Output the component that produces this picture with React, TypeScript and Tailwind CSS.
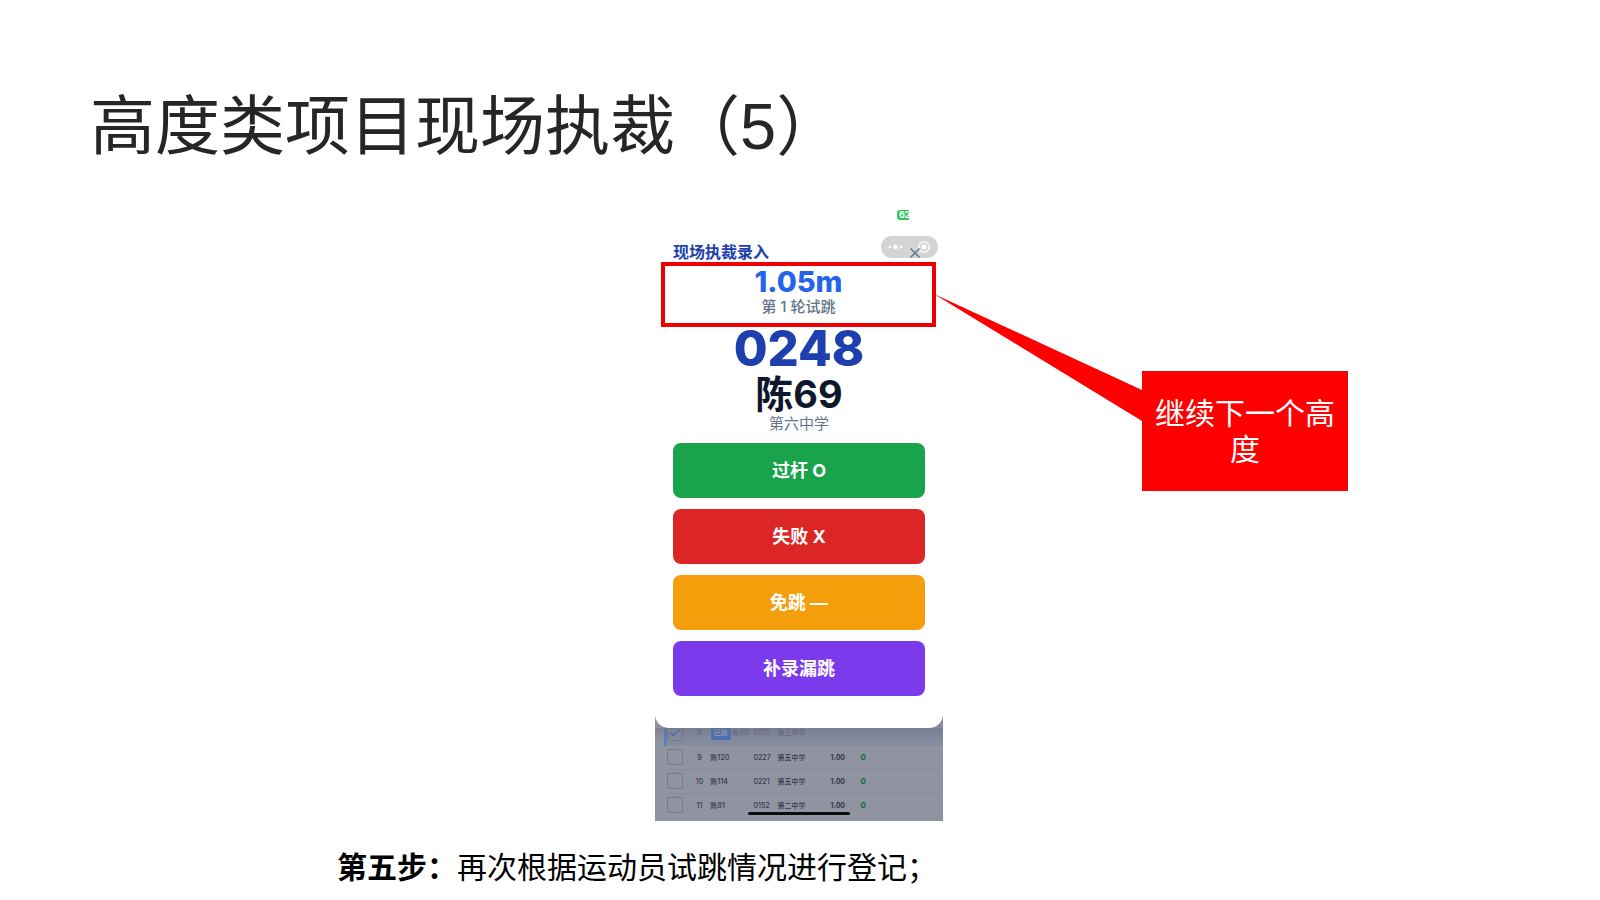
import React from "react";
import { Check } from "lucide-react";

const actions = [
  { label: "过杆 O", className: "bg-[#19a34a]" },
  { label: "失败 X", className: "bg-[#dc2626]" },
  { label: "免跳 —", className: "bg-[#f59e0b]" },
  { label: "补录漏跳", className: "bg-[#7c3aed]" },
];

const athletes = [
  { order: 8, name: "陈90", bib: "0173", school: "第三中学", height: "", result: "", done: true },
  { order: 9, name: "陈120", bib: "0227", school: "第五中学", height: "1.00", result: "O", done: false },
  { order: 10, name: "陈114", bib: "0221", school: "第五中学", height: "1.00", result: "O", done: false },
  { order: 11, name: "陈81", bib: "0152", school: "第二中学", height: "1.00", result: "O", done: false },
];

// Red note box with a wedge that points back at the highlighted area
const Callout: React.FC = () => (
  <div className="absolute top-7 left-full ml-[2px] flex">
    <svg className="block h-[128px] w-[208px]" viewBox="0 0 208 128" aria-hidden="true">
      <polygon points="0,0 208,96 208,127" fill="#ff0000" />
    </svg>
    <p className="mt-[77px] flex h-[120px] w-[206px] shrink-0 items-center justify-center bg-[#ff0000] px-2 text-center text-[30px] leading-9 text-white">
      继续下一个高度
    </p>
  </div>
);

const AthleteTable: React.FC = () => (
  <table className="w-full table-fixed border-collapse text-left text-[7px] leading-none font-medium">
    <colgroup>
      <col className="w-6" />
      <col className="w-[20px]" />
      <col className="w-[44px]" />
      <col className="w-[24px]" />
      <col className="w-[46px]" />
      <col className="w-[31px]" />
      <col />
    </colgroup>
    <tbody>
      {athletes.map((a) => (
        <tr
          key={a.order}
          className={`h-6 border-b border-[#898c99] ${
            a.done ? "bg-[#858b9f] text-[#5f6678]" : "text-[#333a4c]"
          }`}
        >
          <td className={a.done ? "border-l-3 border-[#587fc5]" : "pl-px"}>
            <label className="relative block size-4">
              <input
                type="checkbox"
                defaultChecked={a.done}
                aria-label={`选择 ${a.name}`}
                className="block size-4 appearance-none rounded-[2px] border border-[#777b88]"
              />
              {a.done && <Check className="absolute inset-0 m-auto size-3 text-[#3f68b3]" strokeWidth={2.5} />}
            </label>
          </td>
          <td className="text-center">{a.order}</td>
          <td className="pl-px whitespace-nowrap">
            {a.done && (
              <span className="mr-[2px] rounded-[2px] bg-[#4a6fb5] px-[3px] py-[3px] text-[#9dacc9]">已选</span>
            )}
            {a.name}
          </td>
          <td>{a.bib}</td>
          <td>{a.school}</td>
          <td className="pl-[7px] font-bold">{a.height}</td>
          <td className="pl-[6px] font-extrabold text-[#0c7048]">{a.result}</td>
        </tr>
      ))}
    </tbody>
  </table>
);

const Phone: React.FC = () => (
  <section className="mx-auto w-[288px] bg-[#9093a0] font-['Inter','Noto_Sans_CJK_SC',sans-serif]">
    <div className="relative z-10 rounded-b-[14px] bg-white pb-8">
      {/* Status bar */}
      <div className="flex h-[30px] items-center justify-end pr-[34px]">
        <span className="h-[10px] w-3 overflow-hidden rounded-l-[3px] bg-[#34c759] pl-[2px] text-[9px] leading-[10px] font-bold text-white">
          62
        </span>
      </div>

      <div className="relative flex h-8 items-center pt-[11px] pl-[18px]">
        <h2 className="text-base font-semibold text-[#1e40af]">现场执裁录入</h2>
        <div className="absolute top-[6px] right-[5px] flex h-[22px] w-[57px] items-center rounded-full bg-[#d4d4d4]">
          <svg className="h-[22px] w-[57px]" viewBox="0 0 57 22" fill="#fff" aria-hidden="true">
            <circle cx="9" cy="11" r="1.3" />
            <circle cx="14.5" cy="11" r="2.2" />
            <circle cx="20" cy="11" r="1.3" />
            <circle cx="43" cy="11" r="5.2" fill="none" stroke="#fff" strokeWidth="1.3" />
            <circle cx="43" cy="11" r="2.5" />
          </svg>
        </div>
        <button type="button" aria-label="关闭" className="absolute right-[22px] bottom-[3px]">
          <svg className="size-3" viewBox="0 0 12 12" stroke="#6b7788" strokeWidth="1.5" aria-hidden="true">
            <path d="M1.5 1.5 10.5 10.5M10.5 1.5 1.5 10.5" />
          </svg>
        </button>
      </div>

      <div className="relative mr-[7px] ml-[6px] h-[65px] border-4 border-[#ee0000] text-center">
        <p className="text-[29px] leading-8 font-extrabold text-[#2563eb]">1.05m</p>
        <p className="text-[15px] leading-[18px] font-medium text-[#64748b]">第 1 轮试跳</p>
        <Callout />
      </div>

      <div className="text-center">
        <p className="text-[49px] leading-[44px] font-extrabold text-[#1e40af]">0248</p>
        <p className="text-[38px] leading-[46px] font-bold text-[#0f172a]">陈69</p>
        <p className="text-[15px] leading-[14px] text-[#64748b]">第六中学</p>
      </div>

      <div className="mt-3 flex flex-col gap-[11px] px-[18px]">
        {actions.map((action) => (
          <button
            key={action.label}
            type="button"
            className={`h-[55px] rounded-lg text-lg font-bold text-white ${action.className}`}
          >
            {action.label}
          </button>
        ))}
      </div>
    </div>

    {/* Dimmed list behind the sheet */}
    <div className="relative -mt-[14px] h-[107px] overflow-hidden pt-[7px] pl-[9px]">
      <AthleteTable />
      <div className="absolute inset-x-0 top-[14px] h-3 bg-linear-to-b from-[#6b7080]/50 to-transparent" />
      <div className="absolute bottom-[6px] left-[93px] h-[3px] w-[102px] rounded-full bg-[#0b0c10]" />
    </div>
  </section>
);

const App: React.FC = () => {
  return (
    <main className="overflow-hidden bg-white font-['Liberation_Sans','Noto_Sans_CJK_SC',sans-serif]">
      <h1 className="px-[90px] pt-[83px] text-[65px] leading-[88px] text-[#262626]">高度类项目现场执裁（5）</h1>
      <div className="pt-[29px] pr-[2px]">
        <Phone />
      </div>
      <p className="mt-[27px] mb-2 pl-[337px] text-[30px] leading-10 text-black">
        <strong>第五步：</strong>再次根据运动员试跳情况进行登记；
      </p>
    </main>
  );
};

export default App;
